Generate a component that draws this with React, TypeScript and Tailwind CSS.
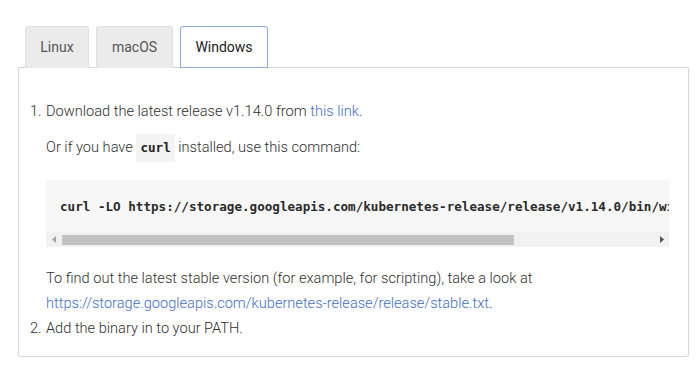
import { FC } from 'react';

const tabs = [
  { label: 'Linux', w: 'w-[64px]' },
  { label: 'macOS', w: 'w-[77px]' },
];

const App: FC = () => {
  return (
    <div className="min-h-screen bg-white pt-[26px] pl-[18px] font-['Roboto',sans-serif] text-[14.6px] font-light text-[#303030]">
      {/* tab bar */}
      <div className="flex gap-[7px] pl-[7px]">
        {tabs.map((t) => (
          <div
            key={t.label}
            className={`${t.w} h-[42px] flex items-center justify-center rounded-t-[3px] border border-b-0 border-[#e0e0e0] bg-[#ebebeb] text-[#555] font-normal text-[14px]`}
          >
            {t.label}
          </div>
        ))}
        <div className="w-[88px] h-[42px] flex items-center justify-center rounded-t-[3px] border border-[#8aa9dc] bg-white text-[#222] font-normal text-[14px]">
          Windows
        </div>
      </div>

      {/* panel */}
      <div className="w-[671px] -mt-px border border-[#d6d6d6] rounded-b-[3px] pt-[31px] pb-[16px] pl-[11px] pr-[19px] leading-6">
        {/* step 1 */}
        <div className="flex">
          <span className="w-[16px] shrink-0">1.</span>
          <div className="flex-1 min-w-0">
            <p>
              Download the latest release v1.14.0 from{' '}
              <a className="text-[#3f6fc8]">this link</a>.
            </p>
            <p className="mt-[11px]">
              Or if you have{' '}
              <code className="inline-block align-middle bg-[#f4f4f4] px-[4px] py-[6px] leading-4 font-['DejaVu_Sans_Mono',monospace] text-[12.6px] font-bold text-[#222]">
                curl
              </code>{' '}
              installed, use this command:
            </p>

            {/* code block with scrollbar */}
            <div className="mt-[18px] bg-[#f7f7f7]">
              <div className="overflow-hidden whitespace-nowrap pt-[19px] pb-[17px] pl-[14px] leading-4 font-['DejaVu_Sans_Mono',monospace] text-[12.6px] font-bold text-[#2a2a2a]">
                curl -LO https://storage.googleapis.com/kubernetes-release/release/v1.14.0/bin/windows/amd64/kubectl.exe
              </div>
              <div className="flex items-center h-[15px] bg-[#f1f1f1]">
                <div className="w-[15px] h-[15px] flex items-center justify-center">
                  <svg width="4" height="7" viewBox="0 0 4 7">
                    <path d="M4 0 L0 3.5 L4 7 Z" fill="#a3a3a3" />
                  </svg>
                </div>
                <div className="flex-1 h-[15px] flex items-center">
                  <div className="w-[452px] h-[10px] ml-px bg-[#c1c1c1]" />
                </div>
                <div className="w-[15px] h-[15px] flex items-center justify-center">
                  <svg width="4" height="7" viewBox="0 0 4 7">
                    <path d="M0 0 L4 3.5 L0 7 Z" fill="#505050" />
                  </svg>
                </div>
              </div>
            </div>

            <p className="mt-[19px] leading-[25px]">
              To find out the latest stable version (for example, for scripting), take a look at
              <br />
              <a className="text-[#3f6fc8]">https://storage.googleapis.com/kubernetes-release/release/stable.txt</a>.
            </p>
          </div>
        </div>

        {/* step 2 */}
        <div className="flex">
          <span className="w-[16px] shrink-0">2.</span>
          <p>Add the binary in to your PATH.</p>
        </div>
      </div>
    </div>
  );
};

export default App;
